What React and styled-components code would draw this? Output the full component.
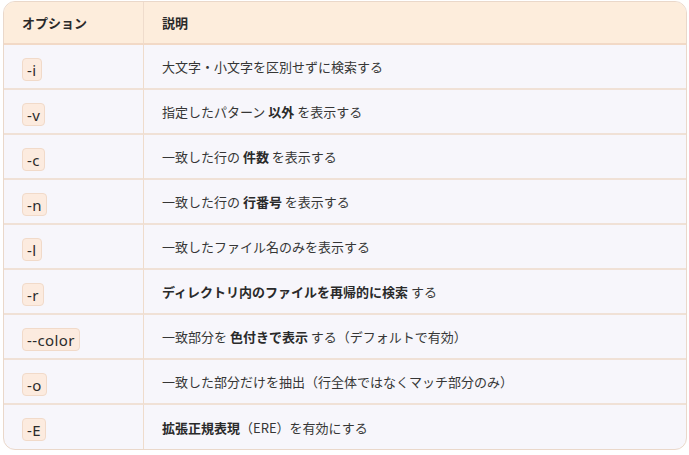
import React from "react";
import styled, { createGlobalStyle } from "styled-components";

const Global = createGlobalStyle`
  html, body { margin: 0; padding: 0; background: #ffffff; }
  body { font-family: "Noto Sans CJK JP", "Noto Sans", sans-serif; color: #2b2b2b; }
`;

const Page = styled.div`
  padding: 1px 2px 0 3px;
`;

const Table = styled.table`
  width: 684px;
  table-layout: fixed;
  border-collapse: separate;
  border-spacing: 0;
  border: 1px solid #ead8ca;
  border-radius: 12px;
  overflow: hidden;
  background: #f7f6fb;
`;

const Th = styled.th`
  height: 41px;
  padding: 0 18px;
  text-align: left;
  font-size: 13px;
  font-weight: 700;
  color: #2a2a2a;
  background: #fdeddc;
  border-bottom: 2px solid #f2d9c6;
  border-left: ${(p) => (p.$first ? "none" : "1px solid #efdccc")};
  width: ${(p) => (p.$first ? "103px" : "auto")};
`;

const Td = styled.td`
  height: ${(p) => (p.$last ? "44px" : "43px")};
  padding: 0 18px;
  font-size: 13px;
  color: #363636;
  border-bottom: ${(p) => (p.$last ? "none" : "2px solid #f0e1d6")};
  border-left: ${(p) => (p.$first ? "none" : "1px solid #efdccc")};
  vertical-align: middle;
`;

const Code = styled.code`
  display: inline-block;
  margin-top: 5px;
  padding: 2px 4px 1px;
  font-family: "Noto Sans", "Open Sans", sans-serif;
  font-size: 15px;
  letter-spacing: 0.4px;
  line-height: 18px;
  color: #2b2b2b;
  background: #fcebdf;
  border: 1px solid #f1dac9;
  border-radius: 4px;
`;

const B = styled.strong`
  font-weight: 700;
  color: #2a2a2a;
`;

const rows = [
  ["-i", <>大文字・小文字を区別せずに検索する</>],
  ["-v", <>指定したパターン <B>以外</B> を表示する</>],
  ["-c", <>一致した行の <B>件数</B> を表示する</>],
  ["-n", <>一致した行の <B>行番号</B> を表示する</>],
  ["-l", <>一致したファイル名のみを表示する</>],
  ["-r", <><B>ディレクトリ内のファイルを再帰的に検索</B> する</>],
  ["--color", <>一致部分を <B>色付きで表示</B> する（デフォルトで有効）</>],
  ["-o", <>一致した部分だけを抽出（行全体ではなくマッチ部分のみ）</>],
  ["-E", <><B>拡張正規表現</B>（ERE）を有効にする</>],
];

export default function App() {
  return (
    <>
      <Global />
      <Page>
        <Table>
          <thead>
            <tr>
              <Th $first>オプション</Th>
              <Th>説明</Th>
            </tr>
          </thead>
          <tbody>
            {rows.map(([opt, desc], i) => (
              <tr key={opt}>
                <Td $first $last={i === rows.length - 1}>
                  <Code>{opt}</Code>
                </Td>
                <Td $last={i === rows.length - 1}>{desc}</Td>
              </tr>
            ))}
          </tbody>
        </Table>
      </Page>
    </>
  );
}
